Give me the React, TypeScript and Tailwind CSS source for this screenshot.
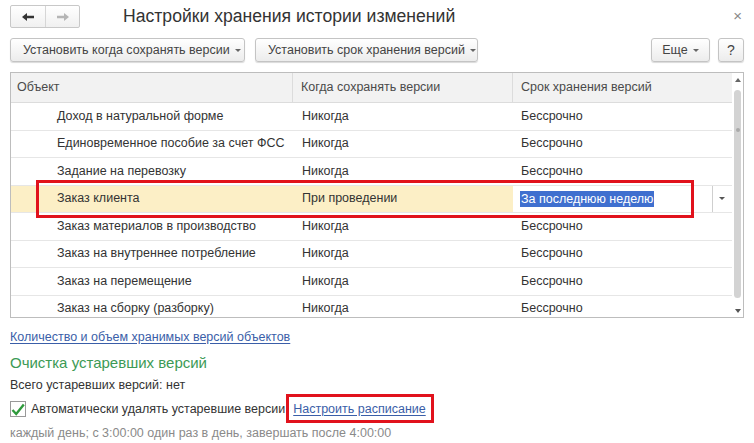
import React from "react";

const rows = [
  { name: "Доход в натуральной форме", when: "Никогда", term: "Бессрочно" },
  { name: "Единовременное пособие за счет ФСС", when: "Никогда", term: "Бессрочно" },
  { name: "Задание на перевозку", when: "Никогда", term: "Бессрочно" },
  { name: "Заказ клиента", when: "При проведении", term: "За последнюю неделю", active: true },
  { name: "Заказ материалов в производство", when: "Никогда", term: "Бессрочно" },
  { name: "Заказ на внутреннее потребление", when: "Никогда", term: "Бессрочно" },
  { name: "Заказ на перемещение", when: "Никогда", term: "Бессрочно" },
  { name: "Заказ на сборку (разборку)", when: "Никогда", term: "Бессрочно" },
];

function Caret() {
  return <span className="ml-[5px] inline-block border-x-[3px] border-t-[3px] border-x-transparent border-t-[#666] align-middle" />;
}

function Btn({ children, className = "" }: { children: React.ReactNode; className?: string }) {
  return (
    <div
      className={
        "flex h-[24px] items-center whitespace-nowrap rounded-[3px] border border-[#c4c4c4] bg-gradient-to-b from-white to-[#ececec] shadow-[0_1px_1px_rgba(0,0,0,0.15)] text-[12.5px] text-[#444] " +
        className
      }
    >
      {children}
    </div>
  );
}

export default function App() {
  return (
    <div
      className="relative h-[443px] w-[754px] overflow-hidden bg-white text-[#333]"
      style={{ fontFamily: '"Liberation Sans", Arial, sans-serif' }}
    >
      {/* title bar */}
      <div className="flex h-[33px] items-start pt-[5px]">
        <div className="ml-[10px] flex h-[23px] w-[70px] rounded-[2px] border border-[#c8c8c8] bg-gradient-to-b from-white to-[#f0f0f0]">
          <div className="flex w-[35px] items-center justify-center border-r border-[#d6d6d6]">
            <svg width="14" height="10" viewBox="0 0 14 10">
              <path d="M1 5 L6 1 L6 3.8 L13 3.8 L13 6.2 L6 6.2 L6 9 Z" fill="#333" />
            </svg>
          </div>
          <div className="flex flex-1 items-center justify-center">
            <svg width="14" height="10" viewBox="0 0 14 10">
              <path d="M13 5 L8 1 L8 3.8 L1 3.8 L1 6.2 L8 6.2 L8 9 Z" fill="#b5b5b5" />
            </svg>
          </div>
        </div>
        <div className="ml-[43px] mt-[-1px] whitespace-nowrap text-[17.6px] leading-[24px] text-[#333]">
          Настройки хранения истории изменений
        </div>
        <div className="ml-auto mr-[12px] mt-[1px] text-[15px] leading-[20px] text-[#888]">×</div>
      </div>

      {/* toolbar */}
      <div className="mt-[5px] flex h-[24px] px-[10px]">
        <Btn className="w-[235px] pl-[12px]">
          Установить когда сохранять версии
          <Caret />
        </Btn>
        <Btn className="ml-[10px] w-[223px] pl-[12px]">
          Установить срок хранения версий
          <Caret />
        </Btn>
        <Btn className="ml-auto w-[59px] justify-center">
          Еще
          <Caret />
        </Btn>
        <Btn className="ml-[8px] w-[26px] justify-center text-[14px] text-[#333]">?</Btn>
      </div>

      {/* table */}
      <div className="mx-[10px] mt-[10px] flex h-[246px] border border-[#bdbdbd]">
        <div className="flex-1 overflow-hidden">
          <div className="grid h-[30px] grid-cols-[282px_220px_1fr] border-b border-[#dcdcdc] bg-[#f2f2f2] text-[12.5px] text-[#4a4a4a]">
            <div className="flex items-center border-r border-[#dcdcdc] pl-[6px]">Объект</div>
            <div className="flex items-center border-r border-[#dcdcdc] pl-[8px]">Когда сохранять версии</div>
            <div className="flex items-center pl-[8px]">Срок хранения версий</div>
          </div>
          {rows.map((r) => (
            <div
              key={r.name}
              className="grid h-[27.5px] grid-cols-[282px_220px_1fr] whitespace-nowrap border-b border-[#e6e6e6] text-[12.5px] text-[#333]"
            >
              <div className={"flex items-center pl-[46px] " + (r.active ? "bg-[#fcefc6]" : "")}>{r.name}</div>
              <div className={"flex items-center pl-[9px] " + (r.active ? "bg-[#fcefc6]" : "")}>{r.when}</div>
              {r.active ? (
                <div className="flex items-center pl-[7px]">
                  <span className="bg-[#3f6fcf] px-[1px] leading-[16px] text-white">{r.term}</span>
                  <div className="ml-auto mr-[1px] flex h-[26px] w-[19px] items-center justify-center border-l border-[#cfcfcf]">
                    <span className="inline-block border-x-[3px] border-t-[3px] border-x-transparent border-t-[#555]" />
                  </div>
                </div>
              ) : (
                <div className="flex items-center pl-[8px]">{r.term}</div>
              )}
            </div>
          ))}
        </div>
        {/* scrollbar */}
        <div className="flex w-[11px] flex-col items-center pt-[5px] pb-[4px]">
          <span className="inline-block border-x-[3px] border-b-[4px] border-x-transparent border-b-[#666]" />
          <div className="relative mt-[8px] w-[7px] flex-1 rounded-[4px] bg-[#d3d3d3]">
            <div className="absolute left-[1.5px] top-[38px] h-[4px] w-[4px] rounded-full bg-[#aaa]" />
          </div>
          <div className="h-[11px]" />
          <span className="inline-block border-x-[3px] border-t-[4px] border-x-transparent border-t-[#555]" />
        </div>
      </div>

      {/* bottom */}
      <div className="whitespace-nowrap px-[10px] text-[12.5px]">
        <div className="mt-[11px] leading-[16px] text-[#3a5ea8] underline underline-offset-2">
          Количество и объем хранимых версий объектов
        </div>
        <div className="mt-[9px] text-[15px] leading-[18px] text-[#3c9a55]">Очистка устаревших версий</div>
        <div className="mt-[5px] leading-[16px] text-[#333]">Всего устаревших версий: нет</div>
        <div className="mt-[8px] flex h-[16px] items-center">
          <div className="flex h-[16px] w-[16px] items-center justify-center border border-[#999] bg-white">
            <svg width="14" height="13" viewBox="0 0 14 13">
              <path d="M1.5 7 L5.2 11 L12.8 1.5" fill="none" stroke="#2f9a3c" strokeWidth="2.4" />
            </svg>
          </div>
          <span className="ml-[5px] text-[#333]">Автоматически удалять устаревшие версии</span>
          <span className="ml-[8px] text-[#3a5ea8] underline underline-offset-2">Настроить расписание</span>
        </div>
        <div className="mt-[8px] leading-[16px] text-[#8a8a8a]">
          каждый день; с 3:00:00 один раз в день, завершать после 4:00:00
        </div>
      </div>

      {/* annotations */}
      <div className="pointer-events-none absolute left-[36px] top-[180px] h-[38px] w-[658px] border-[3px] border-[#e1121c]" />
      <div className="pointer-events-none absolute left-[286px] top-[394px] h-[29px] w-[148px] border-[3px] border-[#e1121c]" />
    </div>
  );
}
